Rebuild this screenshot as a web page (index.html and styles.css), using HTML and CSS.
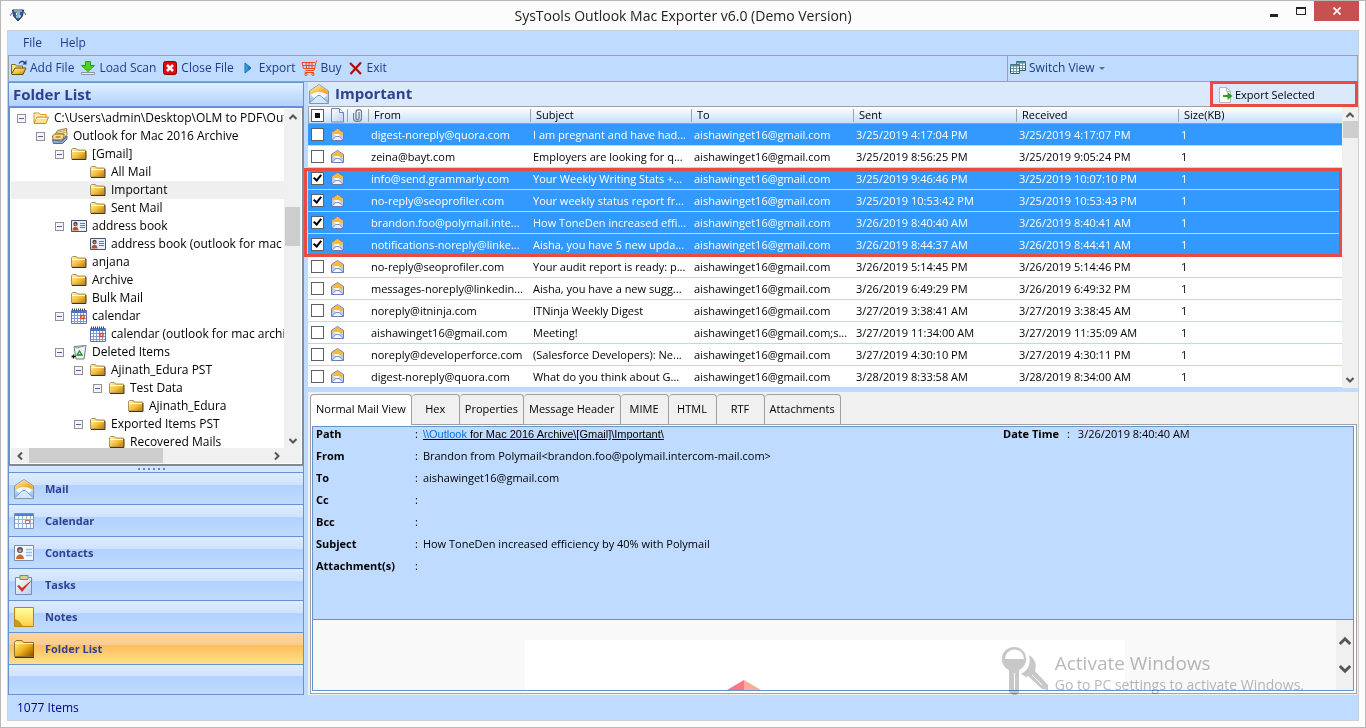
FILE: index.html
```html
<!DOCTYPE html>
<html lang="en">
<head>
<meta charset="utf-8">
<title>SysTools Outlook Mac Exporter v6.0 (Demo Version)</title>
<link rel="stylesheet" href="styles.css">
</head>
<body>
<svg class="defs" aria-hidden="true">
  <defs>
    <linearGradient id="gold" x1="0" y1="0" x2="1" y2="1"><stop offset="0" stop-color="#fff6b8"/><stop offset=".55" stop-color="#f3bd3c"/><stop offset="1" stop-color="#b9740a"/></linearGradient>
    <linearGradient id="goldDeep" x1="0" y1="0" x2="1" y2="1"><stop offset="0" stop-color="#fff3a0"/><stop offset=".5" stop-color="#f0b41c"/><stop offset="1" stop-color="#8f4e00"/></linearGradient>
    <linearGradient id="flap" x1="0" y1="0" x2="1" y2="1"><stop offset="0" stop-color="#fdf3d0"/><stop offset=".7" stop-color="#f9ae22"/></linearGradient>
    <linearGradient id="env" x1="0" y1="0" x2="0" y2="1"><stop offset="0" stop-color="#f4faff"/><stop offset="1" stop-color="#8dbcf0"/></linearGradient>
    <linearGradient id="page" x1="0" y1="0" x2="1" y2="1"><stop offset="0" stop-color="#ffffff"/><stop offset="1" stop-color="#b8cdf0"/></linearGradient>
    <linearGradient id="note" x1="0" y1="0" x2="0" y2="1"><stop offset="0" stop-color="#ffffa0"/><stop offset="1" stop-color="#fdcf45"/></linearGradient>
    <linearGradient id="play" x1="0" y1="0" x2="1" y2="0"><stop offset="0" stop-color="#39b8f5"/><stop offset="1" stop-color="#0a5fae"/></linearGradient>
  </defs>
  <symbol id="folder" viewBox="0 0 16 16"><path d="M.5 13V3.500l1-1h4l1 1.500h8v9z" fill="url(#gold)" stroke="#a3946a"/><path d="M1 5.500h13" stroke="#fffbe0"/><path d="M1 13.500h14V5" fill="none" stroke="#4a3510"/></symbol>
  <symbol id="open" viewBox="0 0 16 16"><path d="M1 13V3h5l1 1.500h6V7" fill="#fff3b8" stroke="#d49a2a"/><path d="M1 13.500L4 7h11.500L13 13.500z" fill="#fde28a" stroke="#d08f22"/><path d="M3 10l1-1.500h9" fill="none" stroke="#fffbe0"/></symbol>
  <symbol id="archive" viewBox="0 0 16 16"><path d="M3.500 6l2-3.500 9-2 .5 6-3 4z" fill="#fdf3c8" stroke="#8a7440"/><path d="M5 4.500l9-2M4.500 6.500l9-2" stroke="#c9973a"/><path d="M.5 8l2-2h9.500v3l-2 3H1z" fill="#f9dc88" stroke="#8c6a20"/><path d="M.5 12l9.500 1 5-5v3l-4.500 4.500h-9z" fill="#8ea9cf" stroke="#56698c"/><path d="M3.500 9h5" stroke="#7c5c18"/></symbol>
  <symbol id="card" viewBox="0 0 16 16"><path d="M.5 2.500h15v11H.5z" fill="#e6efff" stroke="#44536e"/><circle cx="4.500" cy="6" r="2.200" fill="#5c4238"/><circle cx="4.500" cy="6.500" r="1" fill="#c9a080"/><path d="M1.500 12.500c0-5 6-5 6 0z" fill="#b55322"/><path d="M9 5.500h5M9 7.500h5M9 9.500h5" stroke="#4c7fd8"/></symbol>
  <symbol id="cal" viewBox="0 0 16 16"><path d="M.5 2.500h15v13H.5z" fill="#fff" stroke="#5878b8"/><path d="M1 4h14" stroke="#4673cc" stroke-width="2"/><path d="M3.500 5v10M6.500 5v10M9.500 5v10M12.500 5v10M1 7.500h14M1 10.500h14M1 13.500h14" stroke="#7f9dd8"/><path d="M1 1.500h14" stroke="#444" stroke-width="2" stroke-dasharray="1 1"/><path d="M10 7.500h3v3h-3z" fill="#fff" stroke="#e0482a" stroke-width="1.500"/></symbol>
  <symbol id="calbig" viewBox="0 0 20 20"><path d="M.5 2.500h19v15H.5z" fill="#f4f8ff" stroke="#7b8fb4"/><path d="M1 4h18" stroke="#527fcc" stroke-width="2"/><path d="M4.500 5v12M8.500 5v12M12.500 5v12M16.500 5v12M1 8.500h18M1 12.500h18" stroke="#9db4de"/><path d="M11.500 9.500h4v3h-4z" fill="#fff" stroke="#e0583a"/></symbol>
  <symbol id="bin" viewBox="0 0 16 16"><path d="M3 2.500l12-1-2 13.500h-8z" fill="#eef2f4" stroke="#6f7c80"/><path d="M3 2.500l3 1.500 8.500-2.500" fill="none" stroke="#8b969a"/><path d="M8.500 7l2.500 4H6z" fill="none" stroke="#1f8a2c" stroke-width="1.300"/><path d="M.5 12.500h4M2.500 10.500v4" stroke="#111" stroke-width="1.300"/></symbol>
  <symbol id="mail" viewBox="0 0 20 20"><path d="M.5 7L10 .5l9.500 6.500v12.500H.5z" fill="url(#env)" stroke="#8a93a8"/><path d="M1 7.500L10 1l9 6.500V10H1z" fill="url(#flap)"/><path d="M2 11c3-4 13-4 16 0l-4 4H6z" fill="#f4f9ff"/><path d="M.5 19l7-6.500c2-1.500 3-1.500 5 0l7 6.500" fill="#d4e7ff" stroke="#6f9bd2"/></symbol>
  <symbol id="msg" viewBox="0 0 13 13"><path d="M.5 4.500l6-4 6 4v8H.5z" fill="#b9cdf5" stroke="#6e7ab0"/><path d="M1.500 4.500l5-3.500 5 3.500V7h-10z" fill="#fbb93c"/><path d="M2 6h6l1 1.500L6.500 9z" fill="#fff8e0"/><path d="M1 12l4-3.500h3l4 3.500" fill="#f4f8ff" stroke="#7c93cf"/></symbol>
  <symbol id="up" viewBox="0 0 8 6"><path d="M.5 5L4 1.500 7.500 5" fill="none" stroke="#555" stroke-width="2"/></symbol>
  <symbol id="down" viewBox="0 0 8 6"><path d="M.5 1L4 4.500 7.500 1" fill="none" stroke="#555" stroke-width="2"/></symbol>
</svg>

<div class="window">
  <header class="titlebar">
    <svg class="app-logo" viewBox="0 0 16 14"><path d="M2.500 2h11l-1 6L8 13 3.500 8z" fill="#2d5f9e" stroke="#25364f"/><path d="M4 3h8" stroke="#9cc4ee" stroke-width="1.500"/><path d="M10 5H6.500v2H10v2H6" fill="none" stroke="#fff"/><path d="M0 8l2-3M14 4l2 3" stroke="#667"/></svg>
    <h1 class="title">SysTools Outlook Mac Exporter v6.0 (Demo Version)</h1>
    <div class="controls">
      <button class="control" aria-label="Minimize"><svg width="8" height="12" viewBox="0 0 8 12"><path d="M0 10.500h8" stroke="#222" stroke-width="3"/></svg></button>
      <button class="control" aria-label="Maximize"><svg width="10" height="8" viewBox="0 0 10 8"><path d="M.5 1v6.500h9V1z" fill="none" stroke="#222"/><path d="M0 1h10" stroke="#222" stroke-width="2"/></svg></button>
      <button class="control close" aria-label="Close"><svg width="8" height="8" viewBox="0 0 8 8"><path d="M.5.5l7 7M7.500.5l-7 7" stroke="#fff" stroke-width="1.700"/></svg></button>
    </div>
  </header>

  <div class="app">
    <nav class="menubar"><button>File</button><button>Help</button></nav>

    <div class="toolbars">
      <div class="toolbar main-tools">
        <button><svg class="i16" viewBox="0 0 16 16"><path d="M.5 14V4.500h4l1 1.500h6v2" fill="#fbe48a" stroke="#8a6a14"/><path d="M.5 14L4 8h11l-3 6.500H1z" fill="url(#gold)" stroke="#6e500c"/><path d="M8 3.500c2-3 4.500-3 6 0" fill="none" stroke="#23407c" stroke-width="1.300"/><path d="M11.500 4.500h4V0z" fill="#23407c"/></svg>Add File</button>
        <button><svg class="i16" viewBox="0 0 16 16"><path d="M5.500 1.500h5v4h4L8 11.500 1.500 5.500h4z" fill="#4fd418" stroke="#2c9a10"/><path d="M1.500 12.500h13v2h-13z" fill="#e8eef4" stroke="#8794a4"/></svg>Load Scan</button>
        <button><svg class="i16" viewBox="0 0 16 16"><rect x="1.500" y="1.500" width="13" height="13" rx="2" fill="#e00b0b" stroke="#8f0000"/><path d="M5 5l6 6M11 5l-6 6" stroke="#fff" stroke-width="2.600"/></svg>Close File</button>
        <button><svg class="i16" viewBox="0 0 16 16"><path d="M5 3l6 5-6 5z" fill="url(#play)" stroke="#1a6ab0"/></svg>Export</button>
        <button><svg class="i16" viewBox="0 0 16 16"><path d="M15.500.5L13 10.500H4.500M1 2.500h13M1 2.500l1.500 6h11M2 5.500h11.500M5 2.500l.5 6M8 2.500v6M11 2.500v6M4 11.500v1h9" fill="none" stroke="#f0461a"/><circle cx="5" cy="14.300" r="1.200" fill="none" stroke="#f0461a"/><circle cx="12" cy="14.300" r="1.200" fill="none" stroke="#f0461a"/></svg>Buy</button>
        <button><svg class="i16" viewBox="0 0 16 16"><path d="M2 3l11 11M13 2.500L2.500 14" stroke="#b50808" stroke-width="2.200"/></svg>Exit</button>
      </div>
      <div class="toolbar view-tools">
        <button><svg class="i16" viewBox="0 0 16 16"><path d="M6.500 1.500h9v9h-9z" fill="#fff" stroke="#38606c"/><path d="M6 2.500h10" stroke="#4f8b98" stroke-width="2"/><path d="M9.500 3v7M12.500 3v7M7 5.500h8M7 8.500h8" stroke="#6b97a4"/><path d="M.5 4.500h9v9h-9z" fill="#fff" stroke="#38606c"/><path d="M0 5.500h10" stroke="#4f8b98" stroke-width="2"/><path d="M3.500 6v7M6.500 6v7M1 8.500h8M1 11.500h8" stroke="#6b97a4"/></svg>Switch View<span class="caret"></span></button>
      </div>
    </div>

    <div class="body">
      <aside class="sidebar">
        <h2 class="panel-title">Folder List</h2>
        <div class="tree">
          <ul class="nodes">
            <li class="node l0"><button class="toggle" aria-label="Collapse"></button><svg class="i16"><use href="#open"/></svg><span>C:\Users\admin\Desktop\OLM to PDF\Outlo</span></li>
            <li class="node l1"><button class="toggle" aria-label="Collapse"></button><svg class="i16"><use href="#archive"/></svg><span>Outlook for Mac 2016 Archive</span></li>
            <li class="node l2"><button class="toggle" aria-label="Collapse"></button><svg class="i16"><use href="#folder"/></svg><span>[Gmail]</span></li>
            <li class="node l3 leaf"><svg class="i16"><use href="#folder"/></svg><span>All Mail</span></li>
            <li class="node l3 leaf current"><svg class="i16"><use href="#folder"/></svg><span>Important</span></li>
            <li class="node l3 leaf"><svg class="i16"><use href="#folder"/></svg><span>Sent Mail</span></li>
            <li class="node l2"><button class="toggle" aria-label="Collapse"></button><svg class="i16"><use href="#card"/></svg><span>address book</span></li>
            <li class="node l3 leaf"><svg class="i16"><use href="#card"/></svg><span>address book (outlook for mac ar</span></li>
            <li class="node l2 leaf"><svg class="i16"><use href="#folder"/></svg><span>anjana</span></li>
            <li class="node l2 leaf"><svg class="i16"><use href="#folder"/></svg><span>Archive</span></li>
            <li class="node l2 leaf"><svg class="i16"><use href="#folder"/></svg><span>Bulk Mail</span></li>
            <li class="node l2"><button class="toggle" aria-label="Collapse"></button><svg class="i16"><use href="#cal"/></svg><span>calendar</span></li>
            <li class="node l3 leaf"><svg class="i16"><use href="#cal"/></svg><span>calendar (outlook for mac archive</span></li>
            <li class="node l2"><button class="toggle" aria-label="Collapse"></button><svg class="i16"><use href="#bin"/></svg><span>Deleted Items</span></li>
            <li class="node l3"><button class="toggle" aria-label="Collapse"></button><svg class="i16"><use href="#folder"/></svg><span>Ajinath_Edura PST</span></li>
            <li class="node l4"><button class="toggle" aria-label="Collapse"></button><svg class="i16"><use href="#folder"/></svg><span>Test Data</span></li>
            <li class="node l5 leaf"><svg class="i16"><use href="#folder"/></svg><span>Ajinath_Edura</span></li>
            <li class="node l3"><button class="toggle" aria-label="Collapse"></button><svg class="i16"><use href="#folder"/></svg><span>Exported Items PST</span></li>
            <li class="node l4 leaf"><svg class="i16"><use href="#folder"/></svg><span>Recovered Mails</span></li>
          </ul>
          <div class="vscroll tree-v"><svg class="arrow"><use href="#up"/></svg><div class="thumb"></div><svg class="arrow"><use href="#down"/></svg></div>
          <div class="hscroll"><svg class="arrow left"><use href="#up"/></svg><div class="thumb"></div><svg class="arrow right"><use href="#up"/></svg></div>
        </div>
        <div class="splitter"><i></i><i></i><i></i><i></i><i></i><i></i></div>
        <nav class="sections">
          <button><svg class="i20"><use href="#mail"/></svg>Mail</button>
          <button><svg class="i20"><use href="#calbig"/></svg>Calendar</button>
          <button><svg class="i20" viewBox="0 0 20 20"><path d="M.5 2.500h19v15H.5z" fill="#f3f7ff" stroke="#7f8ca6"/><circle cx="6" cy="7" r="3" fill="#5c5654"/><circle cx="6" cy="7.500" r="1.500" fill="#c9a890"/><path d="M2 16c0-6 8-6 8 0z" fill="#d0642a"/><path d="M12 6.500h6M12 9.500h6M12 12.500h6" stroke="#9dbdf0" stroke-width="1.500"/></svg>Contacts</button>
          <button><svg class="i20" viewBox="0 0 20 20"><path d="M1.500 2.500h16v17h-16z" fill="url(#page)" stroke="#6e8cc0"/><path d="M6 .5h8v4H6z" fill="#d8cc96" stroke="#8f8660"/><path d="M3 11l5 6L19 4l-11 9-3-3z" fill="#d8341c"/></svg>Tasks</button>
          <button><svg class="i20" viewBox="0 0 20 20"><path d="M.5.500h19v19H.5z" fill="url(#note)" stroke="#b8860b"/><path d="M1 12l4 2 4 5H1z" fill="#c99a14"/></svg>Notes</button>
          <button class="active"><svg class="i20" viewBox="0 0 20 20"><path d="M.5 17.500V3.500l1.500-2h6l1.500 2h10v14z" fill="url(#goldDeep)" stroke="#8c7430"/><path d="M1 4.500h18" stroke="#fff4bc"/><path d="M1 18.500h19V5" fill="none" stroke="#4a3208"/></svg>Folder List</button>
          <div class="sections-foot"></div>
        </nav>
      </aside>

      <main class="content">
        <div class="list-head">
          <svg class="i20"><use href="#mail"/></svg>
          <h2>Important</h2>
          <button class="export"><svg class="i16" viewBox="0 0 16 16"><path d="M2.500.5h7l4 4v11h-11z" fill="#fff" stroke="#b4b8bc"/><path d="M9.500.5v4h4" fill="none" stroke="#b4b8bc"/><path d="M6 8h4.500V5l5 4-5 4v-3H6z" fill="#2fa01c"/></svg>Export Selected</button>
        </div>

        <div class="list">
          <table class="mails">
            <colgroup><col class="c-check"><col class="c-type"><col class="c-clip"><col class="c-from"><col class="c-subject"><col class="c-to"><col class="c-sent"><col class="c-received"><col class="c-size"></colgroup>
            <thead><tr>
              <th><input type="checkbox" class="box mixed" aria-label="Select all"></th>
              <th><svg width="13" height="15" viewBox="0 0 13 15"><path d="M.5.5h8l4 4v9.500H.5z" fill="url(#page)" stroke="#6f86bc"/><path d="M8.500.5v4h4" fill="#fff" stroke="#6f86bc"/></svg></th>
              <th class="sep"><svg width="9" height="13" viewBox="0 0 9 13"><path d="M6 3v6.500c0 1.500-3 1.500-3 0V3c0-3 5.500-3 5.500 0v6.500c0 4-8 4-8 0V4" fill="none" stroke="#737d92" stroke-width="1.300"/></svg></th>
              <th class="sep">From</th><th class="sep">Subject</th><th class="sep">To</th><th class="sep">Sent</th><th class="sep">Received</th><th class="sep">Size(KB)</th>
            </tr></thead>
            <tbody>
              <tr class="sel"><td><input type="checkbox" class="box" aria-label="Select mail"></td><td><svg class="i13"><use href="#msg"/></svg></td><td></td><td>digest-noreply@quora.com</td><td>I am pregnant and have had...</td><td>aishawinget16@gmail.com</td><td>3/25/2019 4:17:04 PM</td><td>3/25/2019 4:17:07 PM</td><td>1</td></tr>
              <tr><td><input type="checkbox" class="box" aria-label="Select mail"></td><td><svg class="i13"><use href="#msg"/></svg></td><td></td><td>zeina@bayt.com</td><td>Employers are looking for q...</td><td>aishawinget16@gmail.com</td><td>3/25/2019 8:56:25 PM</td><td>3/25/2019 9:05:24 PM</td><td>1</td></tr>
            </tbody>
            <tbody class="marked">
              <tr class="sel"><td><input type="checkbox" class="box" checked aria-label="Select mail"></td><td><svg class="i13"><use href="#msg"/></svg></td><td></td><td>info@send.grammarly.com</td><td>Your Weekly Writing Stats +...</td><td>aishawinget16@gmail.com</td><td>3/25/2019 9:46:46 PM</td><td>3/25/2019 10:07:10 PM</td><td>1</td></tr>
              <tr class="sel"><td><input type="checkbox" class="box" checked aria-label="Select mail"></td><td><svg class="i13"><use href="#msg"/></svg></td><td></td><td>no-reply@seoprofiler.com</td><td>Your weekly status report fr...</td><td>aishawinget16@gmail.com</td><td>3/25/2019 10:53:42 PM</td><td>3/25/2019 10:53:43 PM</td><td>1</td></tr>
              <tr class="sel"><td><input type="checkbox" class="box" checked aria-label="Select mail"></td><td><svg class="i13"><use href="#msg"/></svg></td><td></td><td>brandon.foo@polymail.inte...</td><td>How ToneDen increased effi...</td><td>aishawinget16@gmail.com</td><td>3/26/2019 8:40:40 AM</td><td>3/26/2019 8:40:41 AM</td><td>1</td></tr>
              <tr class="sel"><td><input type="checkbox" class="box" checked aria-label="Select mail"></td><td><svg class="i13"><use href="#msg"/></svg></td><td></td><td>notifications-noreply@linke...</td><td>Aisha, you have 5 new upda...</td><td>aishawinget16@gmail.com</td><td>3/26/2019 8:44:37 AM</td><td>3/26/2019 8:44:41 AM</td><td>1</td></tr>
            </tbody>
            <tbody>
              <tr><td><input type="checkbox" class="box" aria-label="Select mail"></td><td><svg class="i13"><use href="#msg"/></svg></td><td></td><td>no-reply@seoprofiler.com</td><td>Your audit report is ready: p...</td><td>aishawinget16@gmail.com</td><td>3/26/2019 5:14:45 PM</td><td>3/26/2019 5:14:46 PM</td><td>1</td></tr>
              <tr><td><input type="checkbox" class="box" aria-label="Select mail"></td><td><svg class="i13"><use href="#msg"/></svg></td><td></td><td>messages-noreply@linkedin...</td><td>Aisha, you have a new sugg...</td><td>aishawinget16@gmail.com</td><td>3/26/2019 6:49:29 PM</td><td>3/26/2019 6:49:32 PM</td><td>1</td></tr>
              <tr><td><input type="checkbox" class="box" aria-label="Select mail"></td><td><svg class="i13"><use href="#msg"/></svg></td><td></td><td>noreply@itninja.com</td><td>ITNinja Weekly Digest</td><td>aishawinget16@gmail.com</td><td>3/27/2019 3:38:41 AM</td><td>3/27/2019 3:38:45 AM</td><td>1</td></tr>
              <tr><td><input type="checkbox" class="box" aria-label="Select mail"></td><td><svg class="i13"><use href="#msg"/></svg></td><td></td><td>aishawinget16@gmail.com</td><td>Meeting!</td><td>aishawinget16@gmail.com;s...</td><td>3/27/2019 11:34:00 AM</td><td>3/27/2019 11:35:09 AM</td><td>1</td></tr>
              <tr><td><input type="checkbox" class="box" aria-label="Select mail"></td><td><svg class="i13"><use href="#msg"/></svg></td><td></td><td>noreply@developerforce.com</td><td>(Salesforce Developers): Ne...</td><td>aishawinget16@gmail.com</td><td>3/27/2019 4:30:10 PM</td><td>3/27/2019 4:30:11 PM</td><td>1</td></tr>
              <tr><td><input type="checkbox" class="box" aria-label="Select mail"></td><td><svg class="i13"><use href="#msg"/></svg></td><td></td><td>digest-noreply@quora.com</td><td>What do you think about G...</td><td>aishawinget16@gmail.com</td><td>3/28/2019 8:33:58 AM</td><td>3/28/2019 8:34:00 AM</td><td>1</td></tr>
            </tbody>
          </table>
          <div class="vscroll list-v"><svg class="arrow"><use href="#up"/></svg><div class="thumb"></div><svg class="arrow"><use href="#down"/></svg></div>
        </div>

        <section class="detail">
          <div class="tabs" role="tablist">
            <button role="tab" aria-selected="true" class="tab on">Normal Mail View</button>
            <button role="tab" class="tab">Hex</button>
            <button role="tab" class="tab">Properties</button>
            <button role="tab" class="tab">Message Header</button>
            <button role="tab" class="tab">MIME</button>
            <button role="tab" class="tab">HTML</button>
            <button role="tab" class="tab">RTF</button>
            <button role="tab" class="tab">Attachments</button>
          </div>
          <div class="frame">
            <div class="pane">
              <div class="meta">
                <dl class="fields">
                  <dt>Path</dt><dd><a href="#path" class="path"><span>\\Outlook</span> for Mac 2016 Archive\[Gmail]\Important\</a></dd>
                  <dt>From</dt><dd>Brandon from Polymail&lt;brandon.foo@polymail.intercom-mail.com&gt;</dd>
                  <dt>To</dt><dd>aishawinget16@gmail.com</dd>
                  <dt>Cc</dt><dd></dd>
                  <dt>Bcc</dt><dd></dd>
                  <dt>Subject</dt><dd>How ToneDen increased efficiency by 40% with Polymail</dd>
                  <dt>Attachment(s)</dt><dd></dd>
                </dl>
                <dl class="when"><dt>Date Time</dt><dd>3/26/2019 8:40:40 AM</dd></dl>
              </div>
              <div class="preview">
                <div class="sheet"><div class="letter"><svg class="gem" width="36" height="10" viewBox="0 0 36 10"><path d="M18 0v10H1z" fill="#ff7585"/><path d="M18 0v10h17z" fill="#ffab9a"/></svg></div></div>
                <div class="vscroll preview-v"><svg class="arrow"><use href="#up"/></svg><svg class="arrow"><use href="#down"/></svg></div>
              </div>
            </div>
          </div>
          <div class="activate">
            <svg width="48" height="48" viewBox="0 0 48 48" fill="#c8c8c8"><path fill-rule="evenodd" d="M12 0a12 12 0 0 1 5 23v23l-3 2h-3l-4-3V23A12 12 0 0 1 12 0zM3 12h19a9.500 9.500 0 0 0-19 0zM12 26v17h1V26z"/><path d="M27 8c6 4 8 9 6 16l13 14v5l-6-1-14-13-2 1-5-3c8-4 10-11 8-19z"/><path d="M30 28l10 10" stroke="#f9f9f9"/></svg>
            <div><p class="activate-title">Activate Windows</p><p class="activate-sub">Go to PC settings to activate Windows.</p></div>
          </div>
        </section>
      </main>
    </div>

    <footer class="status">1077 Items</footer>
  </div>
</div>
</body>
</html>
```
FILE: styles.css
```css
* { box-sizing: border-box; }
body, h1, h2, p, ul, dl, dd { margin: 0; padding: 0; }
body { font: 12px/16px "Open Sans", "Noto Sans", sans-serif; color: #000; background: #fcfcfc; }
button { font: inherit; color: inherit; background: none; border: 0; padding: 0; margin: 0; }
svg { display: block; flex: none; }
.defs { position: absolute; width: 0; height: 0; }
.i13 { width: 13px; height: 13px; }
.i16 { width: 16px; height: 16px; }
.i20 { width: 20px; height: 20px; }

.window { height: 100vh; min-height: 600px; display: flex; flex-direction: column; padding: 0 6px 6px; border: 1px solid #b9b9b9; }
.titlebar { height: 29px; display: flex; align-items: flex-start; }
.app-logo { width: 16px; height: 14px; margin: 7px 0 0 3px; }
.title { flex: 1; text-align: center; font-size: 14px; font-weight: 400; line-height: 30px; padding-left: 80px; color: #222; }
.controls { display: flex; }
.control { width: 27px; height: 20px; display: flex; align-items: center; justify-content: center; }
.control.close { width: 45px; background: #c75050; }

.app { flex: 1; min-height: 0; display: flex; flex-direction: column; background: #bfdbff; border: 1px solid #d0d0d0; }
.menubar { display: flex; gap: 18px; padding: 0 15px; height: 24px; align-items: center; color: #1e3c8c; }
.toolbars { display: flex; color: #1e3c8c; }
.toolbar { border: 1px solid #a0a0a0; height: 27px; display: flex; align-items: flex-start; }
.toolbar button { display: flex; align-items: center; gap: 3px; height: 24px; }
.main-tools { flex: 1; gap: 6px; padding-left: 2px; }
.view-tools { width: 350px; border-left: 0; padding-left: 2px; }
.caret { border: 3px solid transparent; border-top-color: #5a6f9a; border-bottom: 0; margin-left: 1px; }

.body { flex: 1; min-height: 0; display: flex; gap: 4px; }
.sidebar { width: 296px; display: flex; flex-direction: column; border: 1px solid #6593cf; }
.panel-title { height: 24px; padding-left: 4px; font-size: 15px; line-height: 22px; color: #2f4090; background: linear-gradient(#e3efff, #afd2ff); border-bottom: 1px solid #6593cf; }
.tree { flex: 1; min-height: 0; display: grid; grid-template: minmax(0, 1fr) 15px / minmax(0, 1fr) 17px; padding: 1px; background: #fff; border: 1px solid #828790; border-bottom-width: 2px; }
.nodes { list-style: none; overflow: hidden; }
.node { display: flex; align-items: center; height: 18px; white-space: nowrap; }
.node span { margin-left: 5px; }
.l0 { padding-left: 6px; } .l1 { padding-left: 25px; } .l2 { padding-left: 44px; }
.l3 { padding-left: 63px; } .l4 { padding-left: 82px; }
.l2.leaf { padding-left: 60px; } .l3.leaf { padding-left: 79px; } .l4.leaf { padding-left: 98px; } .l5.leaf { padding-left: 117px; }
.current { background: #efefef; }
.toggle { flex: none; width: 9px; height: 9px; margin-right: 7px; border: 1px solid #919191; background: linear-gradient(#4b63a7, #4b63a7) center / 5px 1px no-repeat, #f6f6f6; }
.vscroll { display: flex; flex-direction: column; justify-content: space-between; align-items: center; background: #f0f0f0; }
.arrow { width: 8px; height: 6px; margin: 5px; }
.thumb { background: #cdcdcd; }
.tree-v .thumb { width: 15px; height: 39px; margin: 82px 0 auto; }
.tree-v .arrow:last-child { margin-bottom: 4px; }
.hscroll { grid-column: 1 / -1; display: flex; align-items: center; background: #f0f0f0; padding-right: 20px; }
.hscroll .thumb { width: 134px; height: 15px; margin-right: auto; }
.arrow.left { transform: rotate(-90deg); margin: 0 5px; }
.arrow.right { transform: rotate(90deg); margin: 0; }
.splitter { height: 6px; display: flex; gap: 3px; align-items: center; justify-content: center; padding-right: 10px; background: #d3e5ff; }
.splitter i { width: 2px; height: 2px; background: #5f8cc9; }
.sections { color: #2f4090; font-size: 11px; font-weight: 700; }
.sections button { width: 100%; height: 32px; display: flex; align-items: center; gap: 11px; padding-left: 5px; border-top: 1px solid #6593cf; background: linear-gradient(#deecff, #cfe2ff 38%, #b2d1ff 40%, #bfdbff); }
.sections button.active { background: linear-gradient(#fcd5a5, #fbcb90 38%, #fdbe5f 40%, #fee085); }
.sections-foot { height: 30px; border-top: 1px solid #6593cf; background: linear-gradient(#deecff, #cfe2ff 38%, #b2d1ff 40%, #bfdbff); }

.content { flex: 1; min-width: 0; display: flex; flex-direction: column; }
.list-head { height: 24px; display: flex; align-items: center; background: #dbe9fd; padding-left: 1px; }
.list-head h2 { flex: 1; margin-left: 6px; font-size: 15px; line-height: 22px; padding-bottom: 2px; color: #2f4090; }
.export { position: relative; z-index: 1; width: 148px; height: 26px; display: flex; align-items: center; gap: 2px; padding: 2px 0 0 4px; border: 3px solid #e94b43; font-size: 11px; }

.list { display: flex; background: #fff; border-top: 1px solid #a0a0a0; font-size: 11px; margin-bottom: 4px; }
.mails { flex: 1; width: 0; table-layout: fixed; border-collapse: separate; border-spacing: 0; }
.c-check { width: 21px; } .c-type { width: 18px; } .c-clip { width: 21px; }
.c-from, .c-to, .c-received { width: 162px; }
.c-subject { width: 161px; }
.c-sent { width: 163px; }
.mails th { height: 17px; padding: 0 0 0 6px; font-weight: 400; text-align: left; line-height: 16px; background: linear-gradient(#fff, #c6deff); border-bottom: 1px solid #a0a0a0; }
.mails th:nth-child(-n+2) { padding: 0 0 0 2px; }
.mails th:first-child { border-left: 1px solid #a0a0a0; }
.mails th.sep { background: linear-gradient(#a0a0a0, #a0a0a0) 0 2px / 1px 13px no-repeat, linear-gradient(#fff, #c6deff); }
.mails td { height: 22px; padding: 0 0 0 3px; line-height: 20px; border-bottom: 1px solid #b8d7fb; white-space: nowrap; }
.mails td:nth-child(2) { padding-left: 2px; }
.sel td { background: #39f; color: #fff; }
.marked { position: relative; }
.marked::after { content: ""; position: absolute; inset: 0 0 -1px -4px; border: 3px solid #e94b43; }
.box { appearance: none; display: block; width: 13px; height: 13px; margin: 0; border: 1px solid #606060; background: #fff; }
.box:checked::before { content: ""; display: block; width: 3px; height: 6px; margin-left: 3px; border: solid #000; border-width: 0 2px 2px 0; transform: rotate(40deg); }
.box.mixed::before { content: ""; display: block; width: 5px; height: 5px; margin: 3px; background: #111; }
.list-v { width: 16px; }
.list-v .arrow:first-child { margin-bottom: 3px; }
.list-v .thumb { width: 15px; height: 17px; margin-bottom: auto; }

.detail { position: relative; flex: 1; min-height: 0; display: flex; flex-direction: column; padding: 2px 1px 1px 2px; background: #f0f0f0; }
.tabs { display: flex; position: relative; z-index: 1; }
.tab { height: 30px; min-width: 48px; padding: 0 5px 2px; border: 1px solid #a0a0a0; border-left-width: 0; border-bottom: 0; border-radius: 4px 4px 0 0; background: #f0f0f0; font-size: 11px; }
.tab.on { height: 31px; margin-bottom: -1px; padding-bottom: 3px; border-left-width: 1px; background: #fff; }
.frame { flex: 1; min-height: 0; display: flex; padding: 1px 2px 2px 1px; background: #fff; border: 1px solid #a0a0a0; }
.pane { flex: 1; min-width: 0; display: flex; flex-direction: column; border: 1px solid #6593cf; background: #bfdbff; font-size: 11px; }
.meta { flex: 1; min-height: 0; display: flex; }
.fields { flex: 1; display: grid; grid-template-columns: 99px 1fr; grid-auto-rows: 22px; align-content: start; padding: 0 3px; line-height: 14px; }
dt { font-weight: 700; }
.fields dd::before, .when dd::before { content: ":"; margin-right: 5px; }
.path { color: #000; font-family: "Liberation Sans", sans-serif; font-size: 11px; text-decoration: underline; }
.path span { color: #0a6ed8; }
.when { display: flex; gap: 8px; width: 350px; line-height: 14px; }
.when dd::before { margin-right: 8px; }
.preview { height: 71px; display: flex; border-top: 1px solid #6593cf; background: #f9f9f9; }
.sheet { flex: 1; padding-top: 20px; display: flex; justify-content: center; }
.letter { width: 600px; background: #fff; display: flex; align-items: flex-end; padding-left: 201px; }
.preview-v { width: 17px; padding: 11px 0; }
.preview-v .arrow { width: 12px; height: 10px; }
.activate { position: absolute; right: 54px; bottom: 0; display: flex; align-items: flex-end; gap: 5px; color: #b9b9b9; mix-blend-mode: multiply; }
.activate-title { font-size: 19px; line-height: 24px; }
.activate-sub { font-size: 14px; line-height: 20px; }

.status { height: 25px; padding-left: 9px; line-height: 26px; font-size: 12px; color: #00008b; }
```
